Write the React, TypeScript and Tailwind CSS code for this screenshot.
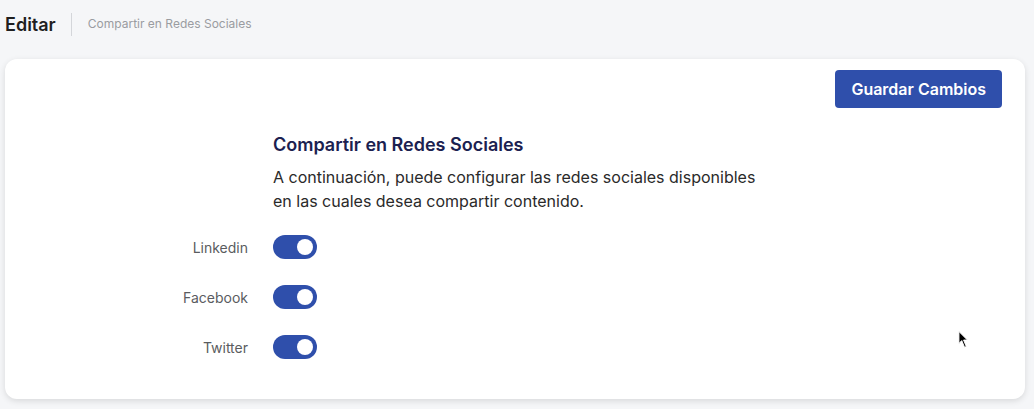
import React, { useState } from 'react';

const networks = ['Linkedin', 'Facebook', 'Twitter'];

const Toggle: React.FC<{ on: boolean; onChange: () => void }> = ({ on, onChange }) => (
  <button
    onClick={onChange}
    className={`w-[44px] h-[24px] rounded-full flex items-center px-[4px] ${
      on ? 'bg-[#2f4fab] justify-end' : 'bg-gray-300 justify-start'
    }`}
  >
    <span className="w-[16px] h-[16px] rounded-full bg-white" />
  </button>
);

export default function App() {
  const [enabled, setEnabled] = useState<Record<string, boolean>>({
    Linkedin: true,
    Facebook: true,
    Twitter: true,
  });

  return (
    <div className="min-h-screen bg-[#f5f6f8] pl-[5px] pr-[9px] pb-[10px] font-['Inter',sans-serif] relative">
      <div className="h-[48px] flex items-center">
        <h1 className="text-[18px] font-semibold text-[#1f1f1f]">Editar</h1>
        <div className="w-px h-[23px] bg-[#d4d6da] ml-[15px] mr-[16px]" />
        <span className="text-[12px] text-[#9a9ca1]">Compartir en Redes Sociales</span>
      </div>

      <div className="mt-[11px] bg-white rounded-[12px] shadow-[0_2px_6px_rgba(0,0,0,0.12)] pt-[11px] pr-[23px] pb-[38px]">
        <div className="flex justify-end">
          <button className="h-[38px] px-[16px] rounded-[4px] bg-[#2f4fab] text-white text-[16px] font-semibold">
            Guardar Cambios
          </button>
        </div>

        <div className="grid grid-cols-[243px_1fr] gap-x-[25px] mt-[23px]">
          <div />
          <div>
            <h2 className="text-[18px] leading-[28px] font-semibold text-[#1b2150]">
              Compartir en Redes Sociales
            </h2>
            <p className="mt-[6px] max-w-[490px] text-[16px] leading-[24px] text-[#2a2a2a]">
              A continuación, puede configurar las redes sociales disponibles en las cuales desea compartir contenido.
            </p>
          </div>

          {networks.map((n, i) => (
            <React.Fragment key={n}>
              <div
                className={`text-right text-[14px] leading-[26px] text-[#5a5c60] ${
                  i === 0 ? 'mt-[22px]' : 'mt-[24px]'
                }`}
              >
                {n}
              </div>
              <div className={`h-[26px] ${i === 0 ? 'mt-[22px]' : 'mt-[24px]'}`}>
                <Toggle
                  on={enabled[n]}
                  onChange={() => setEnabled({ ...enabled, [n]: !enabled[n] })}
                />
              </div>
            </React.Fragment>
          ))}
        </div>
      </div>

      <svg className="absolute left-[958px] top-[331px]" width="12" height="18" viewBox="0 0 10 16">
        <path d="M0.5 0.5 L0.5 11 L3 8.5 L5.5 14.5 L7 13.8 L4.6 8 L8 8 Z" fill="#000" stroke="#fff" strokeWidth="0.8" />
      </svg>
    </div>
  );
}
